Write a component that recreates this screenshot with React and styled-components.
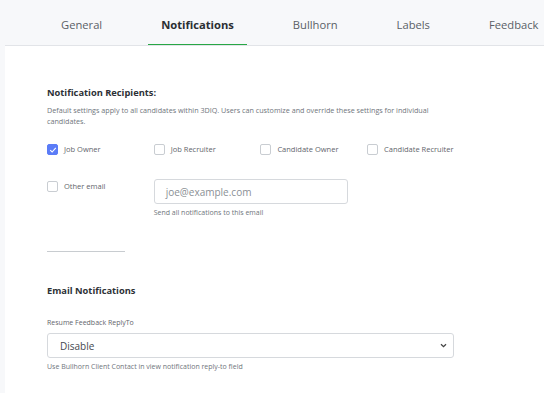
import React from "react";
import styled, { createGlobalStyle } from "styled-components";

const Global = createGlobalStyle`
  html, body { margin: 0; padding: 0; background: #fff; }
  body { font-family: "Open Sans", "Noto Sans", sans-serif; color: #333; }
  * { box-sizing: border-box; }
`;

const Page = styled.div`
  display: flex;
  min-height: 393px;
  background: #f7f8fa;
  padding-left: 5px;
`;

const Main = styled.div`
  flex: 1;
  min-width: 0;
  background: #fff;
  display: flex;
  flex-direction: column;
`;

const TabBar = styled.div`
  display: flex;
  gap: 32px;
  height: 46px;
  padding-left: 42.5px;
  padding-top: 4px;
  background: #f7f8fa;
  border-bottom: 1px solid #e2e4e8;
  white-space: nowrap;
  overflow: hidden;
`;

const Tab = styled.div`
  display: flex;
  align-items: center;
  padding: 0 13.5px;
  font-size: 11.2px;
  font-weight: ${(p) => (p.$active ? 700 : 400)};
  color: ${(p) => (p.$active ? "#2b2f33" : "#5a5f66")};
  position: relative;
  &::after {
    content: "";
    display: ${(p) => (p.$active ? "block" : "none")};
    position: absolute;
    left: 0;
    right: 0;
    bottom: -2px;
    height: 3px;
    background: #28a745;
  }
`;

const Content = styled.div`
  padding: 40px 0 0 42px;
`;

const Title = styled.h3`
  margin: 0;
  font-size: 9.3px;
  font-weight: 700;
  color: #2d3136;
`;

const Desc = styled.p`
  margin: 6px 0 0;
  width: 400px;
  font-size: 7.2px;
  line-height: 11px;
  color: #6f757c;
`;

const Grid = styled.div`
  display: grid;
  grid-template-columns: repeat(4, 106.7px);
  margin-top: 17px;
`;

const CheckRow = styled.label`
  display: flex;
  align-items: ${(p) => (p.$top ? "flex-start" : "center")};
  gap: 6px;
  margin-top: ${(p) => (p.$top ? "2px" : "0")};
  font-size: 7.5px;
  line-height: 11px;
  color: #5f656c;
`;

const Box = styled.span`
  width: 11px;
  height: 11px;
  border-radius: 2px;
  flex-shrink: 0;
  border: 1px solid ${(p) => (p.$checked ? "#5b7cf7" : "#c9cdd2")};
  background: ${(p) => (p.$checked ? "#5b7cf7" : "#fff")};
  display: flex;
  align-items: center;
  justify-content: center;
`;

const EmailRow = styled.div`
  display: grid;
  grid-template-columns: 106.7px 194px;
  align-items: start;
  margin-top: 24px;
`;

const Field = styled.div`
  display: flex;
  flex-direction: column;
`;

const Input = styled.div`
  height: 25px;
  border: 1px solid #d6d9dd;
  border-radius: 3px;
  display: flex;
  align-items: center;
  padding-left: 11px;
  font-size: 10px;
  color: #8a8f95;
`;

const Help = styled.div`
  margin-top: 4px;
  font-size: 7px;
  color: #6f757c;
`;

const Divider = styled.hr`
  width: 78px;
  margin: 34px 0 0;
  border: 0;
  border-top: 1px solid #c8ccd0;
`;

const Section2 = styled.div`
  margin-top: 32px;
`;

const Label = styled.div`
  margin-top: 21px;
  font-size: 7px;
  color: #5f656c;
`;

const Select = styled.div`
  margin-top: 6px;
  width: 407px;
  height: 25px;
  border: 1px solid #d6d9dd;
  border-radius: 3px;
  display: flex;
  align-items: center;
  justify-content: space-between;
  padding: 0 6px 0 12px;
  font-size: 10px;
  color: #44494f;
`;

const Check = () => (
  <svg width="8" height="8" viewBox="0 0 8 8">
    <path d="M1.2 4.2 L3.1 6 L6.8 1.8" fill="none" stroke="#fff" strokeWidth="1.1" />
  </svg>
);

const Chevron = () => (
  <svg width="7" height="5" viewBox="0 0 7 5">
    <path d="M1 1.2 L3.5 3.6 L6 1.2" fill="none" stroke="#444" strokeWidth="1.3" />
  </svg>
);

const tabs = ["General", "Notifications", "Bullhorn", "Labels", "Feedback"];
const recipients = [
  { label: "Job Owner", checked: true },
  { label: "Job Recruiter" },
  { label: "Candidate Owner" },
  { label: "Candidate Recruiter" },
];

export default function App() {
  return (
    <>
      <Global />
      <Page>
        <Main>
          <TabBar>
            {tabs.map((t) => (
              <Tab key={t} $active={t === "Notifications"}>{t}</Tab>
            ))}
          </TabBar>
          <Content>
            <Title>Notification Recipients:</Title>
            <Desc>
              Default settings apply to all candidates within 3DIQ. Users can customize and override these settings for individual candidates.
            </Desc>
            <Grid>
              {recipients.map((r) => (
                <CheckRow key={r.label}>
                  <Box $checked={r.checked}>{r.checked && <Check />}</Box>
                  {r.label}
                </CheckRow>
              ))}
            </Grid>
            <EmailRow>
              <CheckRow $top>
                <Box />
                Other email
              </CheckRow>
              <Field>
                <Input>joe@example.com</Input>
                <Help>Send all notifications to this email</Help>
              </Field>
            </EmailRow>
            <Divider />
            <Section2>
              <Title>Email Notifications</Title>
              <Label>Resume Feedback ReplyTo</Label>
              <Select>
                Disable
                <Chevron />
              </Select>
              <Help>Use Bullhorn Client Contact in view notification reply-to field</Help>
            </Section2>
          </Content>
        </Main>
      </Page>
    </>
  );
}
